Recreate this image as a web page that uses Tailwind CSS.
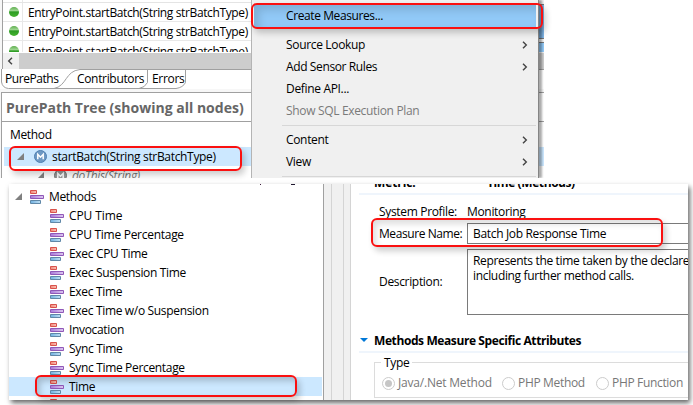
<!DOCTYPE html>
<html lang="en"><head><meta charset="utf-8"><title>Create Measures</title>
<script src="https://cdn.jsdelivr.net/npm/@tailwindcss/browser@4"></script></head>
<body class="relative h-[405px] w-[693px] overflow-hidden bg-white font-['Open_Sans','Noto_Sans',sans-serif] text-[12px] tracking-[-0.33px] whitespace-nowrap text-black">
<svg class="absolute" width="0" height="0">
  <defs>
    <linearGradient id="g" x1="0" y1="0" x2="0" y2="1"><stop offset="0" stop-color="#5fae50"/><stop offset=".35" stop-color="#9bd48d"/><stop offset=".5" stop-color="#2e9c24"/><stop offset="1" stop-color="#45b32f"/></linearGradient>
    <linearGradient id="r" x1="0" x2="1"><stop offset="0" stop-color="#f08878"/><stop offset="1" stop-color="#f8c0b8"/></linearGradient>
    <linearGradient id="p" x1="0" x2="1"><stop offset="0" stop-color="#a878d8"/><stop offset="1" stop-color="#dcc8f0"/></linearGradient>
    <linearGradient id="b" x1="0" x2="1"><stop offset="0" stop-color="#70b0e0"/><stop offset="1" stop-color="#c0e0f4"/></linearGradient>
  </defs>
  <symbol id="dot" viewBox="0 0 12 12"><circle cx="6" cy="6" r="5" fill="url(#g)"/></symbol>
  <symbol id="bars" viewBox="0 0 14 14"><path d="M.5.5h6v3h-6z" fill="url(#r)" stroke="#d9534c"/><path d="M.5 5.5h13v3H.5z" fill="url(#p)" stroke="#9058b8"/><path d="M.5 10.5h10v3H.5z" fill="url(#b)" stroke="#6088a8"/></symbol>
  <symbol id="tri" viewBox="0 0 7 7"><path d="M7 0v7H0z" fill="#808080"/></symbol>
  <symbol id="m" viewBox="0 0 13 13"><circle cx="6.5" cy="6.5" r="6" fill="currentColor" fill-opacity=".75" stroke="currentColor"/><path d="M3.800 9.300V4.300L6.500 7.200 9.200 4.300V9.300" fill="none" stroke="#fff" stroke-width="1.500"/></symbol>
  <symbol id="chev" viewBox="0 0 6 8"><path d="M1 .7 4.3 4 1 7.3" fill="none" stroke="#444" stroke-width="1.4"/></symbol>
</svg>

<main class="relative h-[178px] w-[544px] overflow-hidden bg-[#f7f7f7]">
  <section class="ml-[2px] h-[69px] border-l border-[#a0a0a0] bg-white">
    <div class="h-[52px] overflow-hidden tracking-[-0.37px]">
      <div class="flex h-[3px] border-b border-[#e4e4e4]"><div class="w-5 border-r border-[#e8e8e8]"></div></div>
      <div class="flex h-[19px] items-center border-b border-[#e8e8e8]"><div class="flex h-full w-5 items-center border-r border-[#e8e8e8] pl-[5px]"><svg class="size-3"><use href="#dot"/></svg></div><span class="pt-[2px] pl-[5px]">EntryPoint.startBatch(String strBatchType)</span></div>
      <div class="flex h-[19px] items-center border-b border-[#e8e8e8]"><div class="flex h-full w-5 items-center border-r border-[#e8e8e8] pl-[5px]"><svg class="size-3"><use href="#dot"/></svg></div><span class="pt-[2px] pl-[5px]">EntryPoint.startBatch(String strBatchType)</span></div>
      <div class="flex h-[19px] items-center"><div class="flex h-full w-5 items-center border-r border-[#e8e8e8] pl-[5px]"><svg class="size-3"><use href="#dot"/></svg></div><span class="pt-[2px] pl-[5px]">EntryPoint.startBatch(String strBatchType)</span></div>
    </div>
    <div class="flex h-[17px] border-t border-white bg-[#cdcdcd]"><div class="flex w-4 items-center justify-center bg-[#f0f0f0]"><svg class="mr-[2px] h-2 w-[6px] rotate-180"><use href="#chev"/></svg></div></div>
  </section>
  <nav class="relative h-5 bg-white">
    <svg class="absolute inset-0" width="544" height="20" fill="none" stroke="#a0a0a0"><path d="M1.500 0v13q1 6 7 6.500H54C67 17 65 2 80 .5H544M54 19.500H139q6-1 8.500-6V.5M139 19.500H176q7-1 9.500-6V.5"/></svg>
    <div class="relative flex h-full items-center"><span class="ml-[5px] w-[72px] tracking-[-0.45px]">PurePaths</span><span class="w-[75px]">Contributors</span><span>Errors</span></div>
  </nav>
  <section class="mt-[3px] ml-[1px] h-[86px] border-t border-l border-[#a0a0a0] bg-white">
    <h2 class="flex h-[29px] items-center border-b border-[#a0a0a0] pl-[4px] text-[14px] font-bold tracking-[0.01px] text-[#666]">PurePath Tree (showing all nodes)</h2>
    <div class="flex h-[25px] items-center pl-2">Method</div>
    <div class="ml-[2px] flex h-[19px] items-center bg-[#cce8ff] pl-[13px]"><svg class="mr-[10px] size-[7px]"><use href="#tri"/></svg><svg class="mr-[5px] size-[13px] text-[#4f7fb0]"><use href="#m"/></svg>startBatch(String strBatchType)</div>
    <div class="ml-[2px] flex h-[19px] items-center pl-[33px] text-[#777] italic"><svg class="mr-[10px] size-[7px]"><use href="#tri"/></svg><svg class="mr-[5px] size-[13px] text-[#777]"><use href="#m"/></svg>doThis(String)</div>
  </section>
  <div class="absolute top-0 left-[538px] h-[53px] w-[6px] bg-[#f0f0f0]"><div class="mt-1 h-[35px] border-y border-[#777] bg-[#7fb5e6]"></div><div class="mt-[3px] h-[10px] border-t border-[#777] bg-[#91c9f7]"></div></div>
  <menu class="absolute top-0 left-[251px] h-[178px] w-[288px] border-r border-l border-[#b4b4b4] border-r-[#858585] bg-[#f0f0f0] pr-[2px] pl-[2px] shadow-[3px_0_2px_#0005]">
    <li class="mt-[5px] flex h-[22px] items-center bg-[#91c9f7] pl-8 tracking-[-0.4px] shadow-[inset_5px_5px_8px_#0002]">Create Measures...</li>
    <li class="mt-[7px] flex h-[22px] items-center pr-[8px] pl-8"><span class="flex-1">Source Lookup</span><svg class="h-2 w-[6px]"><use href="#chev"/></svg></li>
    <li class="flex h-[22px] items-center pr-[8px] pl-8"><span class="flex-1 tracking-[-0.38px]">Add Sensor Rules</span><svg class="h-2 w-[6px]"><use href="#chev"/></svg></li>
    <li class="flex h-[22px] items-center pl-8">Define API...</li>
    <li class="flex h-[22px] items-center pl-8 text-[#7a7a7a]">Show SQL Execution Plan</li>
    <li class="mt-[3px] ml-7 h-px bg-[#d7d7d7]"></li>
    <li class="mt-[3px] flex h-[22px] items-center pr-[8px] pl-8"><span class="flex-1">Content</span><svg class="h-2 w-[6px]"><use href="#chev"/></svg></li>
    <li class="flex h-[22px] items-center pr-[8px] pl-8"><span class="flex-1">View</span><svg class="h-2 w-[6px]"><use href="#chev"/></svg></li>
    <li class="mt-[3px] ml-7 h-px bg-[#d7d7d7]"></li>
  </menu>
</main>
<div class="absolute top-[3px] left-[251px] h-[26px] w-[292px] rounded-[6px] border-2 border-[#fa1010] shadow-[3px_4px_6px_#0003]"></div>
<div class="absolute top-[146px] left-[9px] h-[25px] w-[233px] rounded-[6px] border-2 border-[#fa1010] shadow-[3px_4px_6px_#0003]"></div>

<div class="absolute top-[184px] left-[9px] flex h-[216px] w-[679px] overflow-hidden bg-white">
  <aside class="relative w-[315px] shrink-0 border-r border-[#a0a0a0] pt-[3px] pr-px">
    <i class="absolute top-0 left-[251px] h-px w-px bg-[#402040]"></i><i class="absolute top-0 left-[282px] h-px w-[4px] bg-[#201830]"></i>
    <div class="flex h-[19px] items-center pl-[6px]"><svg class="mr-[8px] size-[7px]"><use href="#tri"/></svg><svg class="mr-[5px] size-[14px]"><use href="#bars"/></svg>Methods</div>
    <div class="flex h-[19px] items-center gap-[5px] pl-[41px]"><svg class="size-[14px]"><use href="#bars"/></svg><span class="tracking-[-0.1px]">CPU Time</span></div>
    <div class="flex h-[19px] items-center gap-[5px] pl-[41px]"><svg class="size-[14px]"><use href="#bars"/></svg><span class="tracking-[-0.28px]">CPU Time Percentage</span></div>
    <div class="flex h-[19px] items-center gap-[5px] pl-[41px]"><svg class="size-[14px]"><use href="#bars"/></svg>Exec CPU Time</div>
    <div class="flex h-[19px] items-center gap-[5px] pl-[41px]"><svg class="size-[14px]"><use href="#bars"/></svg>Exec Suspension Time</div>
    <div class="flex h-[19px] items-center gap-[5px] pl-[41px]"><svg class="size-[14px]"><use href="#bars"/></svg>Exec Time</div>
    <div class="flex h-[19px] items-center gap-[5px] pl-[41px]"><svg class="size-[14px]"><use href="#bars"/></svg>Exec Time w/o Suspension</div>
    <div class="flex h-[19px] items-center gap-[5px] pl-[41px]"><svg class="size-[14px]"><use href="#bars"/></svg>Invocation</div>
    <div class="flex h-[19px] items-center gap-[5px] pl-[41px]"><svg class="size-[14px]"><use href="#bars"/></svg>Sync Time</div>
    <div class="flex h-[19px] items-center gap-[5px] pl-[41px]"><svg class="size-[14px]"><use href="#bars"/></svg>Sync Time Percentage</div>
    <div class="flex h-[19px] items-center gap-[5px] bg-[#cce8ff] pl-[41px]"><svg class="size-[14px]"><use href="#bars"/></svg>Time</div>
    <div class="flex h-[19px] items-center gap-[5px] pl-[41px]"><svg class="size-[14px]"><use href="#bars"/></svg></div>
  </aside>
  <div class="flex w-[27px] shrink-0 bg-[#f0f0f0]"><div class="w-2 border-r border-[#d4d4d4]"></div><div class="w-3 border-r border-[#d4d4d4]"></div><div class="w-[7px] border-r border-[#d4d4d4]"></div></div>
  <section class="flex min-w-0 flex-1 flex-col pl-2">
    <div class="flex h-[9px] shrink-0 font-bold tracking-[-0.4px]"><span class="-mt-[10px] w-[128px] pl-[15px] tracking-[-0.1px]">Metric:</span><span class="-mt-[10px]">Time (Methods)</span></div>
    <div class="h-[2px] shrink-0 bg-[#eff5fc]"></div>
    <div class="mt-[7px] flex h-[19px] shrink-0 items-center pl-5"><span class="w-[88px]">System Profile:</span><span>Monitoring</span></div>
    <div class="mt-[2px] flex h-[21px] shrink-0 items-center pl-5"><span class="w-[88px] tracking-[-0.42px]">Measure Name:</span><span class="flex h-[21px] flex-1 items-center border border-r-0 border-[#7a7a7a] pl-[5px]">Batch Job Response Time</span></div>
    <div class="mt-[5px] flex h-[66px] shrink-0 items-center pl-5"><span class="w-[88px]">Description:</span><div class="h-full min-w-0 flex-1 overflow-hidden border border-r-0 border-[#7a7a7a] pt-[3px] pl-[5px] leading-[15px]">Represents the time taken by the declared<br>including further method calls.</div></div>
    <h3 class="mt-[16px] flex h-[19px] shrink-0 items-center font-bold tracking-[-0.4px]"><svg class="mr-[6px] ml-px" width="8" height="5"><path d="M0 0h8L4 4z" fill="#0078d7"/></svg>Methods Measure Specific Attributes</h3>
    <div class="mt-px h-[2px] shrink-0 bg-[#eff5fc]"></div>
    <div class="mt-[9px] ml-[15px] h-[36px] shrink-0 border border-r-0 border-[#dcdcdc]">
      <div class="-mt-[7px] ml-[6px] h-[14px] w-fit bg-white px-[3px] leading-[14px]">Type</div>
      <div class="mt-[4px] flex h-[18px] items-center pl-[7px] text-[#777]"><span class="mr-[3px] flex size-[13px] shrink-0 items-center justify-center rounded-full border border-[#ccc]"><i class="size-[7px] rounded-full bg-[#c6c6c6]"></i></span><span class="w-[104px] shrink-0 tracking-[-0.2px]">Java/.Net Method</span><span class="mr-[3px] size-[13px] shrink-0 rounded-full border border-[#ccc]"></span><span class="w-[78px] shrink-0">PHP Method</span><span class="mr-[3px] size-[13px] shrink-0 rounded-full border border-[#ccc]"></span><span>PHP Function</span></div>
    </div>
  </section>
</div>
<div class="pointer-events-none absolute top-[184px] left-[9px] h-[216px] w-[679px] shadow-[2px_3px_5px_#0009]"></div>
<div class="absolute top-[375px] left-[35px] h-[22px] w-[262px] rounded-[6px] border-2 border-[#fa1010] shadow-[3px_4px_6px_#0003,inset_3px_4px_6px_#0003]"></div>
<div class="absolute top-[218px] left-[371px] h-[29px] w-[292px] rounded-[6px] border-2 border-[#fa1010] shadow-[3px_4px_6px_#0003,inset_3px_4px_6px_#0002]"></div>
</body></html>
